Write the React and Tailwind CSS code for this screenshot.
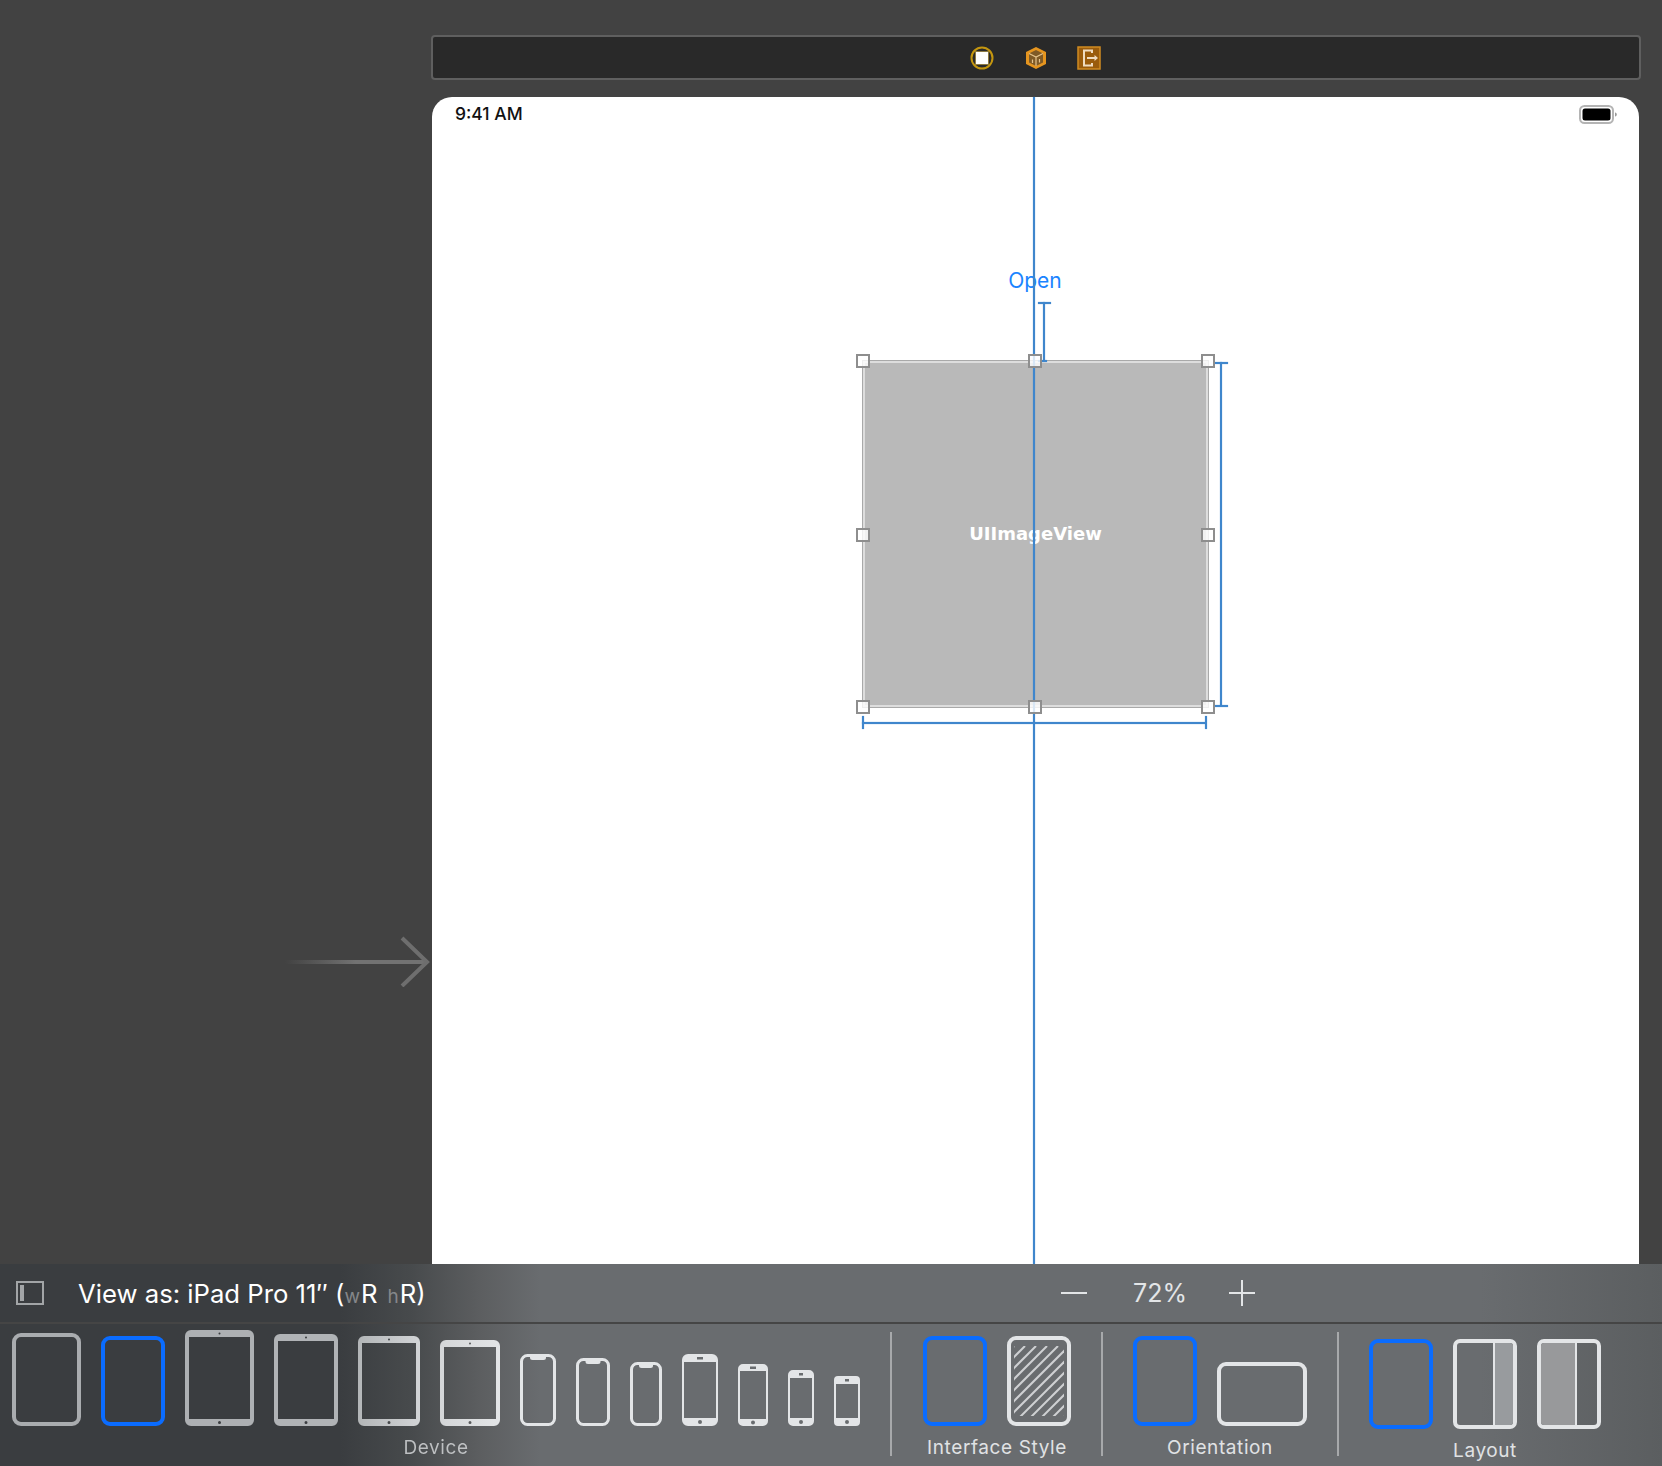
const font = { fontFamily: 'Inter, "Liberation Sans", sans-serif' };

function rr(x, y, w, h, r) {
  return `M${x + r} ${y}h${w - 2 * r}a${r} ${r} 0 0 1 ${r} ${r}v${h - 2 * r}a${r} ${r} 0 0 1 -${r} ${r}h-${w - 2 * r}a${r} ${r} 0 0 1 -${r} -${r}v-${h - 2 * r}a${r} ${r} 0 0 1 ${r} -${r}z`;
}

function circle(cx, cy, r) {
  return `M${cx - r} ${cy}a${r} ${r} 0 1 0 ${r * 2} 0a${r} ${r} 0 1 0 -${r * 2} 0z`;
}

function Frame({ w, h, color = '#e3e5e7', sw = 4, r = 7, children }) {
  return (
    <svg width={w} height={h} viewBox={`0 0 ${w} ${h}`} className="block shrink-0">
      {children}
      <rect x={sw / 2} y={sw / 2} width={w - sw} height={h - sw} rx={r} fill="none" stroke={color} strokeWidth={sw} />
    </svg>
  );
}

function Bezel({ id, w, h, side, top, bottom, r, inner = 0, color, from, to, cam, home, slot }) {
  let d = rr(0, 0, w, h, r) + rr(side, top, w - 2 * side, h - top - bottom, inner);
  if (cam) d += circle(w / 2, top / 2, cam);
  if (home) d += circle(w / 2, h - bottom / 2, home);
  if (slot) d += rr(w / 2 - slot / 2, top / 2 - 1, slot, 2.5, 0);
  return (
    <svg width={w} height={h} viewBox={`0 0 ${w} ${h}`} className="block shrink-0">
      {from && (
        <defs>
          <linearGradient id={id}>
            <stop offset="0" stopColor={from} />
            <stop offset="1" stopColor={to} />
          </linearGradient>
        </defs>
      )}
      <path d={d} fillRule="evenodd" fill={from ? `url(#${id})` : color} />
    </svg>
  );
}

function Notch({ w, h, nw }) {
  return (
    <Frame w={w} h={h} sw={3} r={6}>
      <path d={`M${(w - nw) / 2} 1h${nw}v2.500a2.500 2.500 0 0 1 -2.500 2.500h-${nw - 5}a2.500 2.500 0 0 1 -2.500 -2.500z`} fill="#e3e5e7" />
    </Frame>
  );
}

function Hatch() {
  const lines = [];
  for (let i = 0; i < 13; i++) {
    const x = 7 + i * 11;
    lines.push(<line key={i} x1={x - 80} y1="90" x2={x} y2="10" stroke="#cfd1d3" strokeWidth="2" />);
  }
  return (
    <Frame w={64} h={90}>
      <defs>
        <clipPath id="hatch-box">
          <rect x="7" y="10" width="50" height="70" />
        </clipPath>
      </defs>
      <g clipPath="url(#hatch-box)">{lines}</g>
    </Frame>
  );
}

function Split({ left }) {
  return (
    <div className="relative h-[90px] w-16 shrink-0 overflow-hidden rounded-[7px] border-4 border-[#e3e5e7]">
      {left ? (
        <div className="h-full w-[36px] border-r-2 border-[#e3e5e7] bg-[#98999b]" />
      ) : (
        <div className="ml-[36px] h-full border-l-2 border-[#e3e5e7] bg-[#989b9e]" />
      )}
    </div>
  );
}

function Group({ label, gradient, height = 'h-[102px]', children }) {
  return (
    <div className="flex flex-col">
      <div className={`flex items-end gap-5 ${height}`}>{children}</div>
      <div
        className={
          'mt-[9px] text-center text-[19px] leading-[26px] tracking-[0.6px] ' +
          (gradient
            ? 'bg-[linear-gradient(90deg,#b4b6b8_0%,#bec0c2_50%,#e0e2e4_100%)] bg-clip-text text-transparent'
            : 'text-[#e0e2e4]')
        }
      >
        {label}
      </div>
    </div>
  );
}

function Divider({ className }) {
  return <div className={`ml-[30px] mt-[8px] h-[124px] w-[2px] shrink-0 bg-[#a7a9ab] ${className}`} />;
}

function Handle({ pos }) {
  return (
    <div className={`absolute h-[14px] w-[14px] border-2 border-[#8e8e8e] bg-white/80 ${pos}`} />
  );
}

function Guide({ pos }) {
  return <div className={`absolute bg-[#3f86cc] shadow-[0_0_1px_#3f86cc] ${pos}`} />;
}

function Toolbar() {
  return (
    <div className="flex h-[45px] items-center justify-center rounded-[4px] border-2 border-[#5f5f5f] bg-[#292929]">
      <svg width="134" height="26" viewBox="0 0 134 26" className="block">
        <circle cx="13" cy="13" r="10.500" fill="#2b2b2b" stroke="#c4960f" strokeWidth="2" />
        <rect x="6.500" y="6.500" width="13" height="13" fill="#fff" stroke="#8d7a45" strokeWidth="1" />
        <path d="M67 2l10 5v12l-10 5l-10-5v-12z" fill="#e5951f" />
        <path d="M67 5l7 3.500v9l-7 3.500l-7-3.500v-9z" fill="#7f5a26" />
        <path d="M60 8.500l7 3.500 7-3.500M67 12v9M63.500 14.500v3.500M70.500 14v3.500" fill="none" stroke="#e6c48c" strokeWidth="1.200" />
        <rect x="109" y="2" width="22" height="22" fill="#9a5c0c" stroke="#cf8a21" strokeWidth="1.500" />
        <path d="M123 8v-2.500h-8v15h8v-2.500" fill="none" stroke="#efdcc0" strokeWidth="2" />
        <path d="M118 13h8" stroke="#efdcc0" strokeWidth="2" />
        <path d="M125.500 10l3.500 3l-3.500 3z" fill="#efdcc0" />
      </svg>
    </div>
  );
}

function Scene() {
  return (
    <div className="relative min-h-0 flex-1 rounded-t-[20px] bg-white">
      <div className="flex items-center justify-between pl-[23px] pr-[22px] pt-[6px]">
        <span className="text-[17.500px] font-medium leading-[22px] text-[#111]">9:41 AM</span>
        <svg width="38" height="19" viewBox="0 0 38 19" className="block">
          <rect x="1" y="1" width="33" height="17" rx="4.500" fill="#fff" stroke="#b4b4b4" strokeWidth="2" />
          <rect x="3.500" y="3.500" width="28" height="12" rx="2.500" fill="#000" />
          <path d="M36 7.500c1.200.3 1.800 1.100 1.800 2s-.6 1.700-1.800 2z" fill="#9a9a9a" />
        </svg>
      </div>

      <div className="absolute left-[519px] top-[170px] w-[168px] text-center text-[21px] leading-[28px] text-[#1a84ff]">Open</div>

      <div className="absolute left-[431px] top-[264px] flex h-[346px] w-[345px] items-center justify-center border-2 border-[#dddddd] bg-[#b9b9b9] pb-[2px] outline outline-1 outline-[#a9a9a9]">
        <span className="text-[18px] font-bold text-white" style={{ fontFamily: '"DejaVu Sans", sans-serif' }}>UIImageView</span>
      </div>

      {/* guide and size constraints */}
      <Guide pos="bottom-0 left-[601px] top-0 w-[2px]" />
      <Guide pos="left-[611px] top-[205px] h-[59px] w-[2px]" />
      <Guide pos="left-[606px] top-[205px] h-[2px] w-[13px]" />
      <Guide pos="left-[606px] top-[263px] h-[2px] w-[9px]" />
      <Guide pos="left-[788px] top-[265px] h-[344px] w-[2px]" />
      <Guide pos="left-[783px] top-[265px] h-[2px] w-[13px]" />
      <Guide pos="left-[783px] top-[608px] h-[2px] w-[13px]" />
      <Guide pos="left-[430px] top-[625px] h-[2px] w-[344px]" />
      <Guide pos="left-[430px] top-[619px] h-[13px] w-[2px]" />
      <Guide pos="left-[773px] top-[619px] h-[13px] w-[2px]" />

      <Handle pos="left-[424px] top-[257px]" />
      <Handle pos="left-[596px] top-[257px]" />
      <Handle pos="left-[769px] top-[257px]" />
      <Handle pos="left-[424px] top-[431px]" />
      <Handle pos="left-[769px] top-[431px]" />
      <Handle pos="left-[424px] top-[603px]" />
      <Handle pos="left-[596px] top-[603px]" />
      <Handle pos="left-[769px] top-[603px]" />
    </div>
  );
}

function BottomBar() {
  return (
    <div className="h-[202px] bg-[linear-gradient(90deg,#3a3d40_0px,#3a3d40_340px,#474a4c_410px,#5c5e60_480px,#696c6f_540px,#696c6f_1480px,#5b5e60_100%)]">
      <div className="flex h-[60px] items-center border-b-2 border-[#454545] pl-4">
        <div className="flex h-6 w-7 border-2 border-[#a2a5a7] p-[2px]">
          <div className="w-1 bg-[#a2a5a7]" />
        </div>
        <div className="ml-[34px] mt-[4px] w-[983px] whitespace-nowrap text-[25.700px] leading-8 text-white">
          View as: iPad Pro 11″ (<span className="text-[19px] text-[#85878a]">w</span><span className="ml-[1px]">R</span><span className="ml-[10px] text-[19px] text-[#85878a]">h</span><span className="ml-[1px]">R)</span>
        </div>
        <div className="h-[2px] w-[26px] bg-[#e3e5e7]" />
        <div className="ml-[46px] w-[52px] text-center text-[25px] leading-8 text-[#e3e5e7]">72%</div>
        <div className="relative ml-[44px] h-[26px] w-[26px]">
          <div className="absolute left-0 top-3 h-[2px] w-[26px] bg-[#e3e5e7]" />
          <div className="absolute left-3 top-0 h-[26px] w-[2px] bg-[#e3e5e7]" />
        </div>
      </div>
      <div className="flex items-start pl-3">
        <Group label="Device" gradient>
          <Frame w={69} h={93} color="#a9acaf" />
          <Frame w={64} h={90} color="#0a6cff" />
          <Bezel w={69} h={96} side={4} top={7} bottom={7} r={6} color="#adb0b3" cam={1} home={1.500} />
          <Bezel w={64} h={92} side={4} top={7} bottom={7} r={6} color="#b0b3b6" cam={1} home={1.500} />
          <Bezel id="b5" w={62} h={90} side={4} top={7} bottom={7} r={6} from="#b3b6b8" to="#d2d4d6" cam={1} home={1.500} />
          <Bezel id="b6" w={60} h={86} side={4} top={7} bottom={7} r={6} from="#d4d6d8" to="#e3e5e7" cam={1} home={1.500} />
          <Notch w={36} h={72} nw={16} />
          <Notch w={34} h={68} nw={15} />
          <Notch w={32} h={64} nw={14} />
          <Bezel w={36} h={72} side={2} top={8} bottom={8} r={6} color="#e3e5e7" home={2} slot={6} />
          <Bezel w={30} h={62} side={2} top={7} bottom={7} r={5} color="#e3e5e7" home={2} slot={6} />
          <Bezel w={26} h={56} side={2} top={8} bottom={8} r={5} color="#e3e5e7" home={2} slot={4} />
          <Bezel w={26} h={50} side={2} top={8} bottom={8} r={4} color="#e3e5e7" home={2} slot={4} />
        </Group>
        <Divider className="mr-[31px]" />
        <Group label="Interface Style">
          <Frame w={64} h={90} color="#0a6cff" />
          <Hatch />
        </Group>
        <Divider className="mr-[30px]" />
        <Group label="Orientation">
          <Frame w={64} h={90} color="#0a6cff" />
          <Frame w={90} h={64} />
        </Group>
        <Divider className="mr-[30px]" />
        <Group label="Layout" height="h-[105px]">
          <Frame w={64} h={90} color="#0a6cff" />
          <Split />
          <Split left />
        </Group>
      </div>
    </div>
  );
}

export default function App() {
  return (
    <div className="flex h-[1466px] w-[1662px] flex-col overflow-hidden bg-[#424242]" style={font}>
      <div className="relative flex min-h-0 flex-1 flex-col gap-[17px] pl-[431px] pr-[21px] pt-[35px]">
        <Toolbar />
        <div className="flex min-h-0 flex-1 flex-col pl-[1px] pr-[2px]">
          <Scene />
        </div>
        {/* entry point arrow */}
        <svg width="150" height="52" viewBox="0 0 150 52" className="absolute left-[281px] top-[935px] block">
          <defs>
            <linearGradient id="entry-line">
              <stop offset="0" stopColor="#727272" stopOpacity="0" />
              <stop offset="0.5" stopColor="#727272" />
            </linearGradient>
          </defs>
          <rect x="4" y="25" width="142" height="4" fill="url(#entry-line)" />
          <path d="M121 3l25 24l-25 24" fill="none" stroke="#6e6e6e" strokeWidth="4" />
        </svg>
      </div>
      <BottomBar />
    </div>
  );
}
